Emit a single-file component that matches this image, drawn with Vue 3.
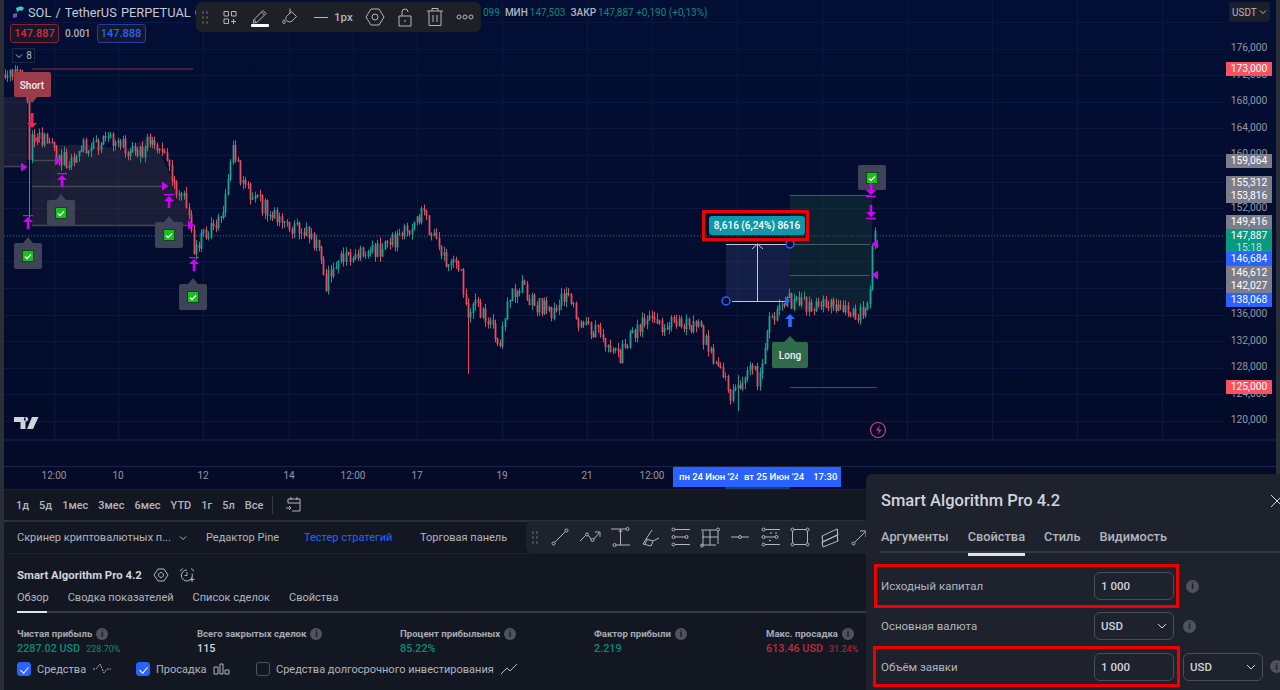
<template>
  <div class="page">
    <!-- chart + price scale -->
    <div class="chart">
      <svg class="plot" viewBox="4 0 1272 466" width="1272" height="466">
        <path :d="gridPath" class="grid" />
        <path d="M4 440H1276" class="pane-line" />
        <path d="M4 236H1224" class="last-line" />

        <!-- short position zones -->
        <rect x="4" y="97" width="23" height="69" fill="#5a4a48" opacity=".24" />
        <path d="M32 140L60 145L92 145L125 150L152 135L170 175L185 200L192 225H32Z" fill="#5a4a48" opacity=".28" />
        <path d="M32 69H193" stroke="#8a2f48" fill="none" />
        <path d="M4 166.500H24M32 160.500H58M32 186.500H165M32 225.500H190" stroke="#45474f" stroke-width="1.500" fill="none" />

        <!-- long position zone -->
        <rect x="790" y="195" width="82" height="115" fill="#1f4f3c" opacity=".32" />
        <path d="M790 195.500H870M790 244.500H870M790 275.500H870" stroke="#4d5a5c" fill="none" />
        <path d="M790 387.500H877" stroke="#8a2f3c" fill="none" />

        <!-- candles -->
        <path :d="candles.upWick" stroke="#159a8a" stroke-width="1" fill="none" />
        <path :d="candles.downWick" stroke="#e34a5c" stroke-width="1" fill="none" />
        <path :d="candles.upBody" fill="#1aa594" />
        <path :d="candles.downBody" fill="#e84d5f" />

        <!-- measure tool -->
        <rect x="726" y="244" width="64" height="57" fill="#5a6aa8" opacity=".2" />
        <path d="M726 244.500H790M732 301.500H786M757.500 244V301M752 249l5.500-5 5.500 5" stroke="#c3c6d0" fill="none" />
        <path d="M785 296l5 5-5 5z" fill="#2962ff" />
        <circle cx="790" cy="244" r="4" fill="#030f38" stroke="#2962ff" stroke-width="1.500" />
        <circle cx="726" cy="301" r="4" fill="#030f38" stroke="#2962ff" stroke-width="1.500" />

        <!-- signal labels -->
        <path d="M16 72H49a2 2 0 0 1 2 2V95a2 2 0 0 1-2 2H37l-5 6-5-6H16a2 2 0 0 1-2-2V74a2 2 0 0 1 2-2Z" fill="#9c3b4c" />
        <text x="32" y="89" class="sig">Short</text>
        <path d="M774 342h10l6-6 6 6h10a2 2 0 0 1 2 2v22a2 2 0 0 1-2 2h-32a2 2 0 0 1-2-2v-22a2 2 0 0 1 2-2Z" fill="#2f6b4a" />
        <text x="790" y="359" class="sig">Long</text>
        <path d="M30.500 113v10h-3.500l5 5 5-5h-3.500v-10z" fill="#ff1f4b" />
        <path d="M34 139l6-4v8z" fill="#ff1f4b" />
        <path d="M790 314l-5 5h3.200v8h3.600v-8h3.200z" fill="#2a6cff" />

        <g v-for="(b, i) in badges" :key="i" :transform="`translate(${b.x} ${b.y})`">
          <path v-if="b.tip" d="M-12-13H-5L0-19L5-13H12a2 2 0 0 1 2 2V11a2 2 0 0 1-2 2H-12a2 2 0 0 1-2-2V-11a2 2 0 0 1 2-2Z" fill="#3e4358" />
          <rect v-else x="-14" y="-13" width="28" height="25" rx="2" fill="#3e4358" />
          <rect x="-5.500" y="-5.500" width="11" height="11" fill="#16c21c" stroke="#0b3a12" stroke-width=".8" />
          <path d="M-3 .5l2 2 4-4" stroke="#fff" stroke-width="1.400" fill="none" />
        </g>

        <g fill="#d500f9">
          <path v-for="(a, i) in upMarks" :key="'u' + i" :transform="`translate(${a[0]} ${a[1]})`" d="M-5-7H5V-5.800H-5ZM0-5l5 5H1.300V7H-1.300V0H-5Z" />
          <path v-for="(a, i) in downMarks" :key="'d' + i" :transform="`translate(${a[0]} ${a[1]})`" d="M-5 7H5V5.800H-5ZM0 5l5-5H1.300V-7H-1.300V0H-5Z" />
          <path v-for="(a, i) in rightTris" :key="'r' + i" :transform="`translate(${a[0]} ${a[1]})`" d="M-3-4.500L3.500 0L-3 4.500Z" />
          <path v-for="(a, i) in leftTris" :key="'l' + i" :transform="`translate(${a[0]} ${a[1]})`" d="M3-4.500L-3.500 0L3 4.500Z" />
        </g>

        <!-- tv logo -->
        <path d="M14 417H25.500V429H20.500V422H14ZM27 429L32 417H38.500L33 429ZM26 417a2.200 2.200 0 1 0 .1 0Z" fill="#d1d4dc" />
        <!-- lightning badge -->
        <circle cx="878" cy="430" r="7.500" fill="none" stroke="#c2447a" stroke-width="1.200" />
        <path d="M880 425l-4 5.500h3l-1.500 4.500 4-5.500h-3z" fill="#c2447a" />
      </svg>

      <!-- legend -->
      <div class="legend">
        <div class="symbol">
          <svg class="plot-logo" width="16" height="14" viewBox="0 0 16 14"><path d="M3 9l4-1v4l-4 1z" fill="#7b4bd6" /><path d="M6 3c3-2 6-2 8 0l-2 3-2-1-3 2z" fill="#2fd3c0" /></svg>
          <span>SOL / TetherUS PERPETUAL CONTRACT</span>
        </div>
        <div class="ohlc">
          <span class="up">099</span><b>МИН</b><span class="up">147,503</span><b>ЗАКР</b><span class="up">147,887 +0,190 (+0,13%)</span>
        </div>
      </div>
      <div class="quotes">
        <span class="quote sell">147.887</span>
        <span class="spread">0.001</span>
        <span class="quote buy">147.888</span>
      </div>
      <div class="collapse"><svg width="8" height="6" viewBox="0 0 8 6"><path d="M1 1.500l3 3 3-3" /></svg>8</div>

      <!-- drawing toolbar -->
      <div class="draw-tools">
        <i class="grip"></i>
        <button v-for="t in topTools" :key="t.id" class="tool" :class="{ on: t.id === 'pen' }">
          <svg width="24" height="24" viewBox="0 0 24 24"><path :d="t.d" /></svg>
        </button>
        <span class="width"><em></em>1px</span>
        <button v-for="t in topTools2" :key="t.id" class="tool">
          <svg width="24" height="24" viewBox="0 0 24 24"><path :d="t.d" /></svg>
        </button>
      </div>

      <!-- price scale -->
      <div class="usdt">USDT<svg width="8" height="6" viewBox="0 0 8 6"><path d="M1 1.500l3 3 3-3" /></svg></div>
      <span v-for="p in scale" :key="p" class="scale-label" :style="{ top: priceY(p) - 7 + 'px' }">{{ fmt(p) }}</span>
      <div v-for="t in tags" :key="t.text" class="tag" :class="t.kind" :style="{ top: t.top + 'px' }">
        {{ t.text }}<small v-if="t.sub">{{ t.sub }}</small>
      </div>

      <!-- measure label -->
      <div class="measure"><span>8,616 (6,24%) 8616</span></div>

      <!-- time scale -->
      <div class="time">
        <span v-for="t in times" :key="t.x" class="time-label" :style="{ left: t.x - 28 + 'px' }">{{ t.text }}</span>
        <div class="time-sel"></div>
        <div class="time-tag first">пн 24 Июн '24</div>
        <div class="time-tag second">вт 25 Июн '24<i></i>17:30</div>
      </div>
    </div>

    <!-- range bar -->
    <div class="ranges">
      <span v-for="r in ranges" :key="r">{{ r }}</span>
      <i class="sep"></i>
      <svg width="18" height="18" viewBox="0 0 18 18"><path d="M3 7V3H15V15H7M3 7H15M6 1V4M12 1V4M1 12H6M4 10l2 2-2 2" /></svg>
    </div>

    <!-- bottom panel -->
    <div class="panel">
      <div class="panel-tabs">
        <span class="tab screener">Скринер криптовалютных п...<svg width="8" height="6" viewBox="0 0 8 6"><path d="M1 1.500l3 3 3-3" /></svg></span>
        <span class="tab">Редактор Pine</span>
        <span class="tab active">Тестер стратегий</span>
        <span class="tab">Торговая панель</span>
        <div class="line-tools">
          <i class="grip"></i>
          <svg v-for="(d, i) in lineTools" :key="i" width="24" height="24" viewBox="0 0 24 24"><path :d="d" /></svg>
        </div>
      </div>

      <div class="strategy">
        <div class="strategy-head">
          <strong>Smart Algorithm Pro 4.2</strong>
          <svg width="16" height="16" viewBox="0 0 16 16"><path d="M5 2H11L15 8L11 14H5L1 8ZM8 5.500a2.500 2.500 0 1 0 .01 0Z" /></svg>
          <svg width="16" height="16" viewBox="0 0 16 16"><path d="M8 3a5.500 5.500 0 1 0 5 3.500M8 5V8.500H5.500M1 4L4 1.500M12 1.500L15 4M13 10V15M10.500 12.500H15.500" /></svg>
        </div>
        <div class="sub-tabs">
          <span class="on">Обзор</span><span>Сводка показателей</span><span>Список сделок</span><span>Свойства</span>
        </div>
        <div class="metrics">
          <div v-for="m in metrics" :key="m.label" class="metric" :style="{ width: m.w + 'px' }">
            <div class="metric-label">{{ m.label }} <span class="info">i</span></div>
            <div class="metric-value" :class="m.tone">{{ m.value }}<small v-if="m.pct">{{ m.pct }}</small></div>
          </div>
        </div>
        <div class="checks">
          <label class="check c1"><i class="box on"></i>Средства
            <svg width="20" height="14" viewBox="0 0 20 14"><path d="M1 7H4L8 2L12 11L15 7H19" stroke-dasharray="2 1" /></svg></label>
          <label class="check c2"><i class="box on"></i>Просадка
            <svg width="18" height="14" viewBox="0 0 18 14"><path d="M1 5H5V12H1ZM7 2H10V12H7ZM12 8H16V12H12Z" /></svg></label>
          <label class="check"><i class="box"></i>Средства долгосрочного инвестирования
            <svg width="18" height="14" viewBox="0 0 18 14"><path d="M1 12L7 6L10 9L17 2" /></svg></label>
        </div>
      </div>
    </div>

    <!-- settings dialog -->
    <div class="dialog">
      <div class="dialog-title">
        <span>Smart Algorithm Pro 4.2</span>
        <svg width="14" height="14" viewBox="0 0 14 14"><path d="M1 1L13 13M13 1L1 13" /></svg>
      </div>
      <div class="dialog-tabs">
        <span>Аргументы</span><span class="on">Свойства</span><span>Стиль</span><span>Видимость</span>
      </div>
      <div class="row marked first-row">
        <span class="row-label">Исходный капитал</span>
        <span class="field">1 000</span>
        <span class="info big outside">i</span>
      </div>
      <div class="row plain">
        <span class="row-label">Основная валюта</span>
        <span class="field select">USD<svg width="10" height="6" viewBox="0 0 10 6"><path d="M1 1l4 4 4-4" /></svg></span>
        <span class="info big">i</span>
      </div>
      <div class="row last-row">
        <div class="marked inner">
          <span class="row-label">Объём заявки</span>
          <span class="field">1 000</span>
        </div>
        <span class="field select small-select">USD<svg width="10" height="6" viewBox="0 0 10 6"><path d="M1 1l4 4 4-4" /></svg></span>
        <span class="info big">i</span>
      </div>
    </div>
  </div>
</template>

<script setup>
const ring = (x, y, r = 1.5) => `M${x - r} ${y}a${r} ${r} 0 1 0 ${2 * r} 0a${r} ${r} 0 1 0 ${-2 * r} 0`

// price <-> pixel on the chart
const priceY = p => 48 + ((176000 - p) / 4000) * 26.6
const fmt = p => p.toLocaleString('en-US')
const scale = [176000, 172000, 168000, 164000, 160000, 152000, 136000, 132000, 128000, 124000, 120000]

const tags = [
  { text: '173,000', top: 62, kind: 'red' },
  { text: '159,064', top: 154, kind: 'grey' },
  { text: '155,312', top: 176, kind: 'grey' },
  { text: '153,816', top: 189, kind: 'grey' },
  { text: '149,416', top: 215, kind: 'grey' },
  { text: '147,887', sub: '15:18', top: 229, kind: 'green' },
  { text: '146,684', top: 252, kind: 'blue' },
  { text: '146,612', top: 266, kind: 'grey' },
  { text: '142,027', top: 279, kind: 'grey' },
  { text: '138,068', top: 293, kind: 'blue' },
  { text: '125,000', top: 380, kind: 'red' }
]

const times = [
  { x: 54, text: '12:00' }, { x: 118, text: '10' }, { x: 203, text: '12' },
  { x: 289, text: '14' }, { x: 353, text: '12:00' }, { x: 417, text: '17' },
  { x: 502, text: '19' }, { x: 587, text: '21' }, { x: 652, text: '12:00' }
]

const gridX = [54, 118, 203, 289, 353, 417, 502, 587, 652, 737, 822, 907, 992, 1077, 1162]
let gridD = ''
for (const x of gridX) gridD += `M${x + 0.5} 0V440`
for (let i = 0; i < 16; i++) gridD += `M4 ${Math.round(22 + i * 26.6) + 0.5}H1224`
const gridPath = gridD

// rough path of the price, screen x -> screen y
const route = [
  [5, 74], [15, 73], [24, 76], [27, 100], [29, 168], [31, 140], [37, 137], [50, 140], [58, 158], [68, 160],
  [80, 148], [92, 145], [105, 140], [118, 143], [130, 150], [143, 150], [152, 137], [162, 150], [172, 182],
  [180, 195], [187, 205], [193, 248], [200, 240], [210, 227], [222, 212], [232, 150], [240, 175], [250, 192],
  [262, 205], [272, 215], [290, 226], [305, 232], [318, 250], [325, 286], [335, 262], [350, 255], [365, 255],
  [380, 250], [395, 240], [410, 226], [422, 213], [435, 240], [445, 262], [460, 270], [468, 322], [475, 305],
  [490, 322], [500, 342], [510, 292], [520, 285], [530, 300], [550, 312], [570, 292], [580, 325], [600, 335],
  [620, 355], [630, 335], [645, 320], [660, 325], [680, 322], [700, 330], [715, 360], [730, 395], [740, 385],
  [750, 360], [758, 382], [770, 320], [780, 312], [790, 300], [800, 302], [815, 308], [830, 305], [845, 310],
  [860, 314], [868, 296], [872, 270], [873, 215], [875, 240], [877, 236]
]
const wicks = { 29: [130, 218], 468: [298, 374], 738: [375, 411], 193: [225, 255], 30: [135, 200] }

function buildCandles() {
  let seed = 4217
  const rnd = () => {
    seed = (seed * 1664525 + 1013904223) % 4294967296
    return seed / 4294967296
  }
  const out = { upBody: '', downBody: '', upWick: '', downWick: '' }
  let seg = 0
  let last = route[0][1]
  for (let x = 5; x <= 877; x += 2.45) {
    while (seg < route.length - 2 && route[seg + 1][0] < x) seg++
    const [x0, y0] = route[seg]
    const [x1, y1] = route[seg + 1]
    const base = y0 + ((y1 - y0) * (x - x0)) / (x1 - x0)
    const swing = x < 30 ? 4 : 8
    const close = base + (rnd() - 0.5) * swing * 2
    const top = Math.min(last, close)
    const bottom = Math.max(last, close) + 0.8
    const isUp = close < last
    const key = Math.round(x)
    const hit = wicks[key] || wicks[key - 1]
    const hi = hit ? hit[0] : top - rnd() * 6
    const lo = hit ? hit[1] : bottom + rnd() * 6
    const px = Math.round(x) + 0.5
    const body = `M${px - 0.9} ${top.toFixed(1)}H${px + 0.9}V${bottom.toFixed(1)}H${px - 0.9}Z`
    const wick = `M${px} ${hi.toFixed(1)}V${lo.toFixed(1)}`
    if (isUp) {
      out.upBody += body
      out.upWick += wick
    } else {
      out.downBody += body
      out.downWick += wick
    }
    last = close
  }
  return out
}
const candles = buildCandles()

const badges = [
  { x: 28, y: 256, tip: true }, { x: 61, y: 213, tip: true }, { x: 169, y: 235, tip: true },
  { x: 193, y: 297, tip: true }, { x: 872, y: 178, tip: false }
]
const upMarks = [[28, 222], [62, 180], [169, 201], [194, 264]]
const downMarks = [[871, 190], [871, 212]]
const rightTris = [[24, 167], [58, 161], [165, 186], [191, 225]]
const leftTris = [[875, 244], [875, 275]]

const topTools = [
  { id: 'fav', d: 'M6 6.500H10.500V11H6ZM13.500 6.500H18V11H13.500ZM6 14H10.500V18.500H6ZM15.500 14V19M13 16.500H18' },
  { id: 'pen', d: 'M5 18L6 14.500L15 5.500L18 8.500L9 17.500ZM13.500 7L16.500 10M6 14.500L8.500 17.500' },
  { id: 'fill', d: 'M8.500 11.500L13.500 6.500L18.500 11.500L14 16C12.500 17.500 10 17 8.500 15.500C7.500 14.500 7.500 12.500 8.500 11.500ZM12 3.500V9M6 15a1.200 1.800 0 1 0 .01 0' }
]
const topTools2 = [
  { id: 'gear', d: 'M8 4H16L21 12L16 20H8L3 12Z' + ring(12, 12, 3) },
  { id: 'lock', d: 'M6 11H18V21H6ZM9 11V7a3 3 0 0 1 6 0M12 15V17' },
  { id: 'trash', d: 'M4 6H20M9 6V3.500H15V6M6 6V20.500H18V6M10 10V17M14 10V17' },
  { id: 'more', d: ring(6, 12, 2) + ring(12, 12, 2) + ring(18, 12, 2) }
]

const lineTools = [
  'M6.500 17.500L17.500 6.500' + ring(5.5, 18.5) + ring(18.5, 5.5),
  'M2 16L7.500 10.500M10.500 10.500L13 14M16 14L21 8M17 7H22V12' + ring(9, 9.5) + ring(14.5, 15),
  'M3 4H18M8 20H22M12.500 4V20M10.500 7L12.500 5L14.500 7' + ring(19.5, 4) + ring(6.500, 20),
  'M8 14L14 5M15 16L21 13M8 14L15 16L13 21L5 19ZM7 19L9 15',
  'M7 4.500H22M7 12H17M7 19.500H22' + ring(5.5, 4.5) + ring(5.5, 12) + ring(18.5, 12) + ring(5.5, 19.5),
  'M3 5H18M5 6V19M3 20H18M20 6V19M4 12H20M12 5V20' + ring(20, 4.5) + ring(4, 20.5),
  'M3 12H10M14 12H21' + ring(12, 12),
  'M7 4.500H22M7 12H17M7 19.500H22M12 8H14M17 8H19M11 15.500H13' + ring(5.5, 4.5) + ring(5.5, 12) + ring(18.5, 12) + ring(5.5, 19.5),
  'M6 4.500H18M6 19.500H18M4.500 6V18M19.500 6V18' + ring(4.5, 4.5) + ring(19.5, 4.5) + ring(4.5, 19.5) + ring(19.5, 19.5),
  'M4 11L19 4L20 10L5 17ZM4 17L19 10L20 16L5 22ZM4.500 11V21M19.500 4V16',
  'M7 17L17 7M12 6H18V12' + ring(5.5, 18.5)
]

const ranges = ['1д', '5д', '1мес', '3мес', '6мес', 'YTD', '1г', '5л', 'Все']

const metrics = [
  { label: 'Чистая прибыль', value: '2287.02 USD', pct: '228.70%', tone: 'up', w: 180 },
  { label: 'Всего закрытых сделок', value: '115', tone: '', w: 203 },
  { label: 'Процент прибыльных', value: '85.22%', tone: 'up', w: 194 },
  { label: 'Фактор прибыли', value: '2.219', tone: 'up', w: 172 },
  { label: 'Макс. просадка', value: '613.46 USD', pct: '31.24%', tone: 'down', w: 110 }
]
</script>

<style>
html, body { margin: 0; background: #2a2e39; }
</style>

<style scoped>
.page {
  position: relative;
  width: 1280px;
  height: 690px;
  overflow: hidden;
  background: #2a2e39;
  font-family: Roboto, "Liberation Sans", sans-serif;
  color: #d1d4dc;
  padding-left: 4px;
  box-sizing: border-box;
}

svg:not(.plot):not(.plot-logo) path { fill: none; stroke: currentColor; }

/* chart */
.chart {
  position: relative;
  width: 1272px;
  height: 489px;
  background: linear-gradient(180deg, #020e34 0%, #030c2d 70%, #040a27 100%);
  border-bottom: 1px solid #1c1f2b;
}
.plot { position: absolute; left: 0; top: 0; display: block; }
.plot .grid { stroke: #0b1740; fill: none; }
.plot .pane-line { stroke: #1b2547; fill: none; }
.plot .last-line { stroke: #0f6f74; stroke-dasharray: 1 2; fill: none; }
.sig { fill: #f0f0f0; font-size: 10px; font-weight: 500; text-anchor: middle; }

.legend {
  position: absolute;
  left: 6px;
  top: 0;
  height: 24px;
  display: flex;
  align-items: center;
  width: 730px;
}
.symbol { display: flex; align-items: center; gap: 2px; width: 473px; font-size: 12.8px; word-spacing: 1px; color: #c6c9d2; white-space: nowrap; overflow: hidden; }
.ohlc { font-size: 10px; white-space: nowrap; color: #b2b5be; }
.ohlc b { margin: 0 2px 0 5px; font-weight: 500; }
.up { color: #0b8a78; }
.down { color: #c2283f; }

.quotes { position: absolute; left: 6px; top: 24px; display: flex; align-items: center; gap: 6px; font-size: 11px; }
.quote { display: block; width: 49px; box-sizing: border-box; text-align: center; height: 19px; line-height: 17px; border-radius: 3px; background: #14182a; font-weight: 500; }
.sell { border: 1px solid #8c1f33; color: #d92a3e; }
.buy { border: 1px solid #1f3fa8; color: #2962ff; }
.spread { color: #b2b5be; font-size: 10px; font-weight: 500; }

.collapse {
  position: absolute;
  left: 8px;
  top: 48px;
  width: 23px;
  height: 15px;
  display: flex;
  align-items: center;
  justify-content: center;
  gap: 3px;
  font-size: 10px;
  color: #b2b5be;
  border: 1px solid #1d2747;
  box-sizing: border-box;
}

.draw-tools {
  position: absolute;
  left: 192px;
  top: 2px;
  width: 285px;
  height: 30px;
  background: #1e2028;
  border-radius: 6px;
  display: flex;
  align-items: center;
  color: #b2b5be;
  box-sizing: border-box;
  padding-left: 5px;
}
.grip { display: block; flex: none; width: 8px; height: 14px; background: radial-gradient(circle, #50535e 1px, transparent 1.300px) 0 0 / 4px 5px; }
.tool {
  flex: none;
  width: 30px;
  height: 30px;
  padding: 0;
  border: 0;
  background: none;
  color: inherit;
  display: flex;
  align-items: center;
  justify-content: center;
  position: relative;
}
.tool:first-of-type { margin-left: 6px; }
.tool.on::after { content: ""; position: absolute; left: 6px; right: 6px; bottom: 5px; height: 3px; background: #fff; border-radius: 1px; }
.width { flex: none; display: flex; align-items: center; gap: 6px; font-size: 11.5px; font-weight: 500; width: 43px; margin-left: 9px; margin-right: 3px; }
.width em { display: block; width: 14px; height: 1px; background: #b2b5be; }

.usdt {
  position: absolute;
  left: 1225px;
  top: 2px;
  width: 41px;
  height: 20px;
  box-sizing: border-box;
  padding: 0 3px;
  background: #1b1f2b;
  border-radius: 3px;
  display: flex;
  align-items: center;
  justify-content: space-between;
  font-size: 10px;
  color: #b2b5be;
}
.scale-label { position: absolute; left: 1222px; width: 46px; text-align: center; font-size: 10.3px; line-height: 14px; color: #9598a1; }
.tag { position: absolute; left: 1222px; width: 46px; min-height: 14px; text-align: center; font-size: 10.3px; line-height: 13.500px; color: #fff; }
.tag small { display: block; font-size: 10.3px; line-height: 10px; opacity: .7; }
.red { background: #f7525f; }
.grey { background: #7b7d8a; }
.green { background: #089981; }
.blue { background: #2962ff; }

.measure {
  position: absolute;
  left: 698px;
  top: 210px;
  width: 107px;
  height: 31px;
  box-sizing: border-box;
  border: 3px solid #f00000;
  display: flex;
  align-items: center;
}
.measure span { display: block; flex: none; width: 96px; margin-left: 4px; text-align: center; background: #0e97a8; color: #fff; font-size: 10px; font-weight: 500; height: 19px; line-height: 19px; border-radius: 3px; white-space: nowrap; }

.time { position: absolute; left: 0; right: 0; top: 466px; height: 23px; border-top: 1px solid #1b2547; box-sizing: border-box; }
.time-label { position: absolute; top: 3px; width: 48px; text-align: center; font-size: 10px; color: #9598a1; }
.time-tag { position: absolute; top: 0; height: 20px; line-height: 20px; background: #2962ff; color: #fff; font-size: 9.500px; font-weight: 500; overflow: hidden; white-space: nowrap; }
.first { left: 669px; width: 65px; padding-left: 6px; box-sizing: border-box; }
.second { left: 734px; width: 103px; padding-left: 6px; box-sizing: border-box; }
.second i { display: inline-block; width: 9px; }
.time-sel { position: absolute; left: 721px; width: 65px; top: 20px; height: 2px; background: #1f3a7a; }

/* range bar */
.ranges {
  height: 30px;
  width: 1272px;
  display: flex;
  align-items: center;
  gap: 10px;
  padding-left: 12px;
  box-sizing: border-box;
  background: #131722;
  font-size: 11px;
  font-weight: 500;
  color: #b2b5be;
}
.sep { display: block; width: 1px; height: 18px; background: #363a45; margin: 0 2px 0 -1px; }

/* panel */
.panel { margin-top: 2px; height: 169px; width: 1276px; background: #131722; }
.panel-tabs { position: relative; display: flex; align-items: center; height: 31px; border-bottom: 1px solid #1d202b; font-size: 11px; color: #b2b5be; }
.tab { display: flex; align-items: center; flex: none; }
.screener { width: 176px; margin-left: 13px; justify-content: space-between; padding-right: 6px; box-sizing: border-box; }
.tab:nth-child(2) { margin-left: 13px; width: 98px; }
.tab:nth-child(3) { width: 116px; }
.active { color: #2962ff; }
.line-tools { width: 340px; height: 32px; background: #1e222d; border-radius: 6px 0 0 6px; display: flex; align-items: center; gap: 6px; padding-left: 5px; box-sizing: border-box; color: #b2b5be; position: absolute; left: 522px; top: -1px; overflow: hidden; }
.line-tools svg { flex: none; }
.line-tools .grip { margin-right: 3px; }

.strategy { padding: 0 0 0 13px; }
.strategy-head { display: flex; align-items: center; height: 37px; padding-top: 4px; box-sizing: border-box; gap: 10px; font-size: 11.4px; color: #d1d4dc; }
.strategy-head svg { color: #b2b5be; flex: none; }
.strategy-head strong { font-weight: 700; margin-right: 1px; }
.sub-tabs { display: flex; gap: 19px; font-size: 11px; color: #b2b5be; height: 20px; width: 849px; border-bottom: 2px solid #363a45; position: relative; }
.sub-tabs .on::after { content: ""; position: absolute; left: 0; bottom: -2px; width: 30px; height: 2px; background: #e0e3eb; }
.metrics { display: flex; margin-top: 13px; }
.metric { flex: none; }
.metric-label { font-size: 9.600px; font-weight: 700; color: #a6a9b2; height: 15px; display: flex; align-items: center; gap: 4px; white-space: nowrap; }
.metric-value { font-size: 10.800px; line-height: 15px; white-space: nowrap; font-weight: 500; }
.metric-value small { font-size: 9px; margin-left: 6px; font-weight: 400; }
.info {
  display: inline-flex;
  width: 12px;
  height: 12px;
  border-radius: 50%;
  background: #50535e;
  color: #1a1d28;
  font-size: 9px;
  font-weight: 800;
  align-items: center;
  justify-content: center;
  font-style: normal;
  flex: none;
}
.info.big { width: 13px; height: 13px; }
.checks { display: flex; margin-top: 5px; font-size: 11px; color: #b2b5be; }
.check { display: flex; align-items: center; gap: 6px; flex: none; }
.c1 { width: 119px; }
.c2 { width: 120px; }
.check svg { flex: none; }
.box { display: block; width: 14px; height: 14px; border: 1px solid #50535e; border-radius: 3px; box-sizing: border-box; }
.box.on {
  background: #2962ff;
  border-color: #2962ff;
  position: relative;
}
.box.on::after { content: ""; position: absolute; left: 3.500px; top: 1.500px; width: 4px; height: 7px; border: solid #fff; border-width: 0 1.500px 1.500px 0; transform: rotate(40deg); }

/* dialog */
.dialog {
  position: absolute;
  left: 866px;
  top: 474px;
  width: 430px;
  height: 216px;
  background: #1e222d;
  border-radius: 6px 0 0 0;
  box-sizing: border-box;
  padding: 0 0 0 15px;
}
.dialog-title { display: flex; align-items: center; justify-content: space-between; height: 53px; font-size: 16.500px; font-weight: 500; color: #d1d4dc; width: 403px; }
.dialog-title svg { color: #d1d4dc; flex: none; }
.dialog-tabs { display: flex; gap: 19px; font-size: 12.800px; font-weight: 500; color: #b2b5be; padding-top: 2px; height: 22px; width: 399px; border-bottom: 2px solid #363a45; position: relative; }
.dialog-tabs .on { position: relative; }
.dialog-tabs .on::after { content: ""; position: absolute; left: 0; right: 0; bottom: -5px; height: 3px; background: #e0e3eb; }
.row { display: flex; align-items: center; font-size: 11.500px; color: #b2b5be; position: relative; }
.row-label { flex: none; width: 213px; }
.marked { box-sizing: border-box; border: 3px solid #f00000; display: flex; align-items: center; }
.first-row { margin: 11px 0 0 -7px; width: 305px; height: 44px; padding-left: 4px; overflow: visible; }
.plain { height: 28px; margin-top: 4px; }
.last-row { margin-top: 6px; height: 41px; margin-left: -8px; }
.inner { width: 307px; height: 41px; padding-left: 5px; flex: none; }
.field {
  flex: none;
  box-sizing: border-box;
  width: 80px;
  height: 28px;
  display: flex;
  align-items: center;
  justify-content: space-between;
  padding: 0 6px;
  border: 1px solid #4a4e5a;
  border-radius: 6px;
  font-size: 11.500px;
  font-weight: 500;
  color: #d1d4dc;
}
.plain .info { margin-left: 9px; }
.outside { position: absolute; left: 309px; }
.small-select { margin-left: 3px; }
.last-row .info { margin-left: 7px; }
</style>
